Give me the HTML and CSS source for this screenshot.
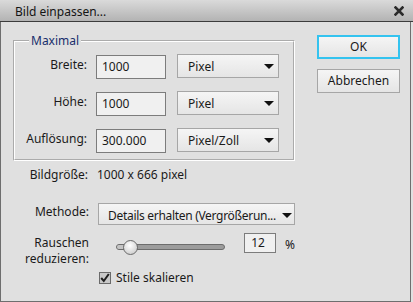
FILE: index.html
```html
<!DOCTYPE html>
<html lang="de">
<head>
<meta charset="utf-8">
<title>Bild einpassen...</title>
<link rel="stylesheet" href="styles.css">
</head>
<body>
<div class="titlebar">
  <span class="title">Bild einpassen...</span>
  <svg class="close" width="10" height="10" viewBox="0 0 10 10"><path d="M1.5 1.5 L8.5 8.5 M8.5 1.5 L1.5 8.5" stroke="#2b2b2b" stroke-width="2.6" stroke-linecap="square"/></svg>
</div>
<div class="dialog">
  <div class="main">
    <fieldset class="group">
      <legend>Maximal</legend>
      <div class="grid">
        <span class="lbl">Breite:</span>
        <div class="field">1000</div>
        <div class="select"><span class="sel-text">Pixel</span><i class="arrow"></i></div>
        <span class="lbl">Höhe:</span>
        <div class="field">1000</div>
        <div class="select"><span class="sel-text">Pixel</span><i class="arrow"></i></div>
        <span class="lbl">Auflösung:</span>
        <div class="field">300.000</div>
        <div class="select"><span class="sel-text">Pixel/Zoll</span><i class="arrow"></i></div>
      </div>
    </fieldset>
    <div class="info"><span class="lbl">Bildgröße:</span><span class="val">1000 x 666 pixel</span></div>
    <div class="lower">
      <span class="lbl method-lbl">Methode:</span>
      <div class="select wide"><span class="sel-text">Details erhalten (Vergrößerun...</span><i class="arrow"></i></div>
      <span class="lbl noise-lbl"><span class="line">Rauschen</span><span class="line">reduzieren:</span></span>
      <div class="noise">
        <div class="slider"><div class="track"><span class="track-left"></span></div><span class="thumb"></span></div>
        <div class="field small">12</div>
        <span class="pct">%</span>
      </div>
      <span></span>
      <div class="check"><span class="box"><svg width="10" height="10" viewBox="0 0 10 10"><path d="M1.2 5 L3.8 8 L8.8 1" fill="none" stroke="#1e1e1e" stroke-width="2"/></svg></span><span>Stile skalieren</span></div>
    </div>
  </div>
  <div class="buttons">
    <div class="btn ok">OK</div>
    <div class="btn">Abbrechen</div>
  </div>
</div>
</body>
</html>
```
FILE: styles.css
```css
* { box-sizing: border-box; }
html, body { margin: 0; padding: 0; }
body {
  width: 413px;
  height: 302px;
  overflow: hidden;
  background: #e0e0e0;
  font-family: "Noto Sans", "Open Sans", sans-serif;
  font-size: 12px;
  color: #1a1a1a;
}
.titlebar {
  height: 22px;
  display: flex;
  align-items: center;
  justify-content: space-between;
  padding: 0 9px 0 15px;
  background: linear-gradient(#dadada, #b3b3b3);
  border-bottom: 1px solid #3c3c3c;
}
.title { line-height: 21px; padding-top: 1px; color: #141414; }
.close { display: block; margin-top: 1px; }

.dialog {
  width: 411px;
  height: 280px;
  display: flex;
  align-items: flex-start;
  border: 1px solid #6e6e6e;
  border-top: none;
  padding: 11px 0 0 12px;
}
.main { width: 282px; }

.group {
  margin: 0;
  padding: 6px 12px 6px 0;
  border: 2px groove #ffffff;
  width: 282px;
  min-width: 0;
}
.group legend {
  margin-left: 14px;
  padding: 0 2px;
  line-height: 15px;
  color: #182f6c;
}
.grid {
  display: grid;
  grid-template-columns: 72px 70px 104px;
  column-gap: 9px;
  row-gap: 12px;
  align-items: start;
}
.grid .select { margin-left: 2px; }
.lbl { text-align: right; }
.grid .lbl { line-height: 22px; }
.field {
  height: 24px;
  margin-top: 1px;
  background: #f0f0f0;
  border: 1px solid #7c7c7c;
  padding-left: 5px;
  line-height: 21px;
}
.select {
  height: 24px;
  display: flex;
  align-items: center;
  justify-content: space-between;
  padding: 1px 4px 0 10px;
  border: 1px solid #a6a6a6;
  background: linear-gradient(#f5f5f5, #e5e5e5);
}
.sel-text { white-space: nowrap; overflow: hidden; }
.arrow {
  flex: none;
  width: 0;
  height: 0;
  border-left: 5px solid transparent;
  border-right: 5px solid transparent;
  border-top: 5px solid #111;
}

.info {
  display: flex;
  gap: 9px;
  margin-top: 6px;
  line-height: 15px;
}
.info .lbl { width: 75px; }

.lower {
  display: grid;
  grid-template-columns: 76px 197px;
  column-gap: 9px;
  row-gap: 0;
  margin-top: 21px;
  align-items: start;
}
.method-lbl { line-height: 15px; margin-top: 1px; }
.select.wide {
  height: 22px;
  padding: 3px 2px 0 9px;
}
.select.wide .sel-text { letter-spacing: -0.3px; }
.noise-lbl { display: flex; flex-direction: column; margin-top: 10px; }
.noise-lbl .line { display: block; height: 16px; line-height: 16px; }
.noise {
  display: flex;
  align-items: center;
  margin-top: 8px;
  height: 20px;
}
.slider {
  position: relative;
  width: 110px;
  height: 14px;
  margin-left: 18px;
  margin-top: 7px;
}
.track {
  position: absolute;
  left: 0;
  right: 0;
  top: 4px;
  height: 6px;
  border: 1px solid #6c6c6c;
  border-radius: 3px;
  background: #9c9c9c;
  overflow: hidden;
}
.track-left { display: block; width: 8px; height: 100%; background: #c4c4c4; }
.thumb {
  position: absolute;
  left: 7px;
  top: 0;
  width: 15px;
  height: 15px;
  border-radius: 50%;
  border: 1px solid #6a6a6a;
  background: radial-gradient(circle at 45% 35%, #ffffff, #d2d2d2 75%);
}
.field.small {
  width: 32px;
  height: 20px;
  margin: 0 0 0 19px;
  padding-left: 6px;
  line-height: 17px;
}
.pct { margin-left: 9px; padding-top: 2px; }
.check {
  display: flex;
  align-items: center;
  gap: 5px;
  margin-top: 3px;
  margin-left: 1px;
  line-height: 15px;
}
.box {
  width: 12px;
  height: 12px;
  border: 1px solid #6a6a6a;
  background: #c8c8c8;
  display: flex;
  align-items: center;
  justify-content: center;
}
.box svg { display: block; }

.buttons {
  margin-left: 22px;
  margin-top: 2px;
  display: flex;
  flex-direction: column;
  gap: 10px;
}
.btn {
  width: 83px;
  height: 24px;
  border: 1px solid #a6a6a6;
  background: linear-gradient(#f5f5f5, #e5e5e5);
  text-align: center;
  line-height: 21px;
}
.btn.ok { border: 2px solid #34c3ef; line-height: 19px; }
```
